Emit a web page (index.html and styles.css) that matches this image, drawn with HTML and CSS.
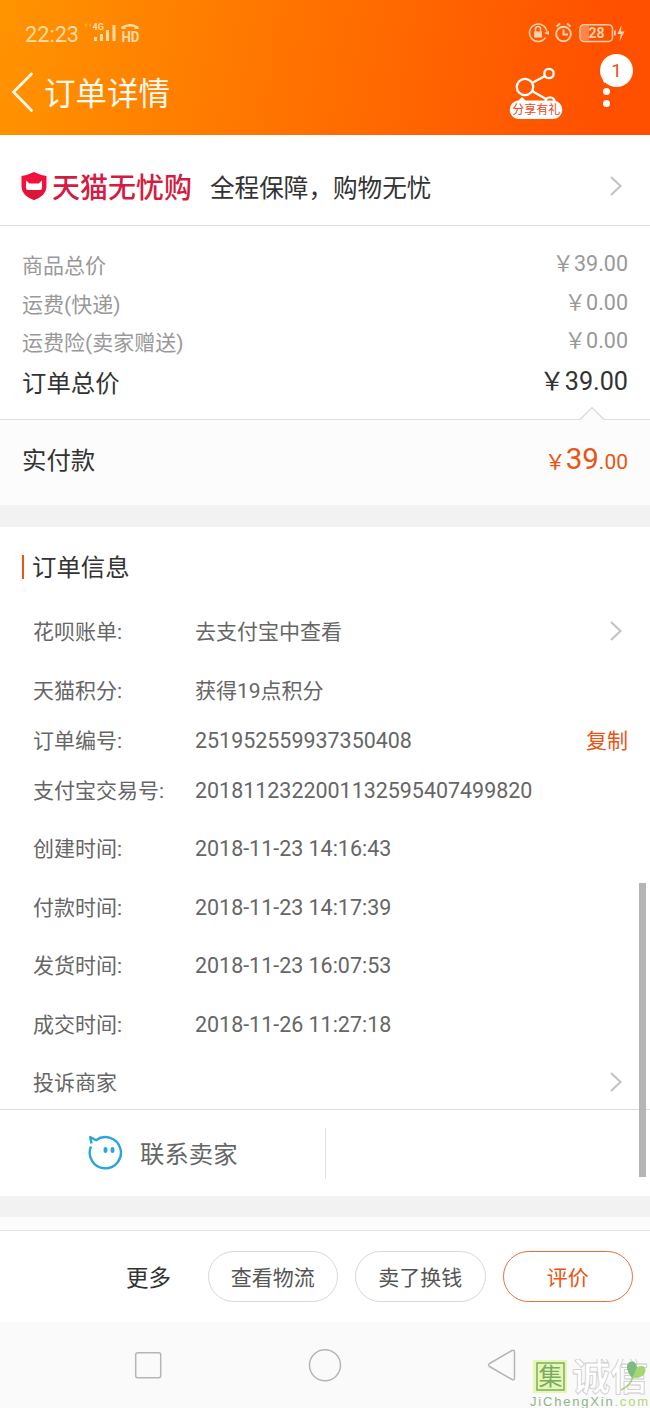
FILE: index.html
```html
<!DOCTYPE html>
<html lang="zh-CN">
<head>
<meta charset="utf-8">
<title>订单详情</title>
<link rel="stylesheet" href="styles.css">
</head>
<body>
<header class="header">
  <div class="status">
    <span class="clock">22:23</span>
    <svg class="signal" width="60" height="24" viewBox="0 0 60 24">
      <path d="M2 4l3-2v4zM7 4l2-2v4z" opacity=".35"/>
      <text x="10.500" y="8.500" class="net">4G</text>
      <path d="M12 16h3v4h-3zM18 13h3v7h-3zM24 9h3v11h-3zM30.500 4h3v16h-3z"/>
      <path d="M39.500 8V5.500q9-5 17 0V8h-4V6.200q-4.500-1.400-9 0V8z"/>
      <text x="39.500" y="20.500" class="hd" textLength="18" lengthAdjust="spacingAndGlyphs">HD</text>
    </svg>
    <svg class="indicators" width="100" height="24" viewBox="0 0 100 24">
      <g fill="none" stroke="#ffd0ad" stroke-width="1.500">
        <path d="M17.500 16.500A8.700 8.700 0 1 1 18.800 10.500"/>
        <path d="M7.500 11V8a2.500 2.500 0 0 1 5 0v3" />
        <circle cx="35.500" cy="13" r="7.300" stroke-width="2"/>
        <path d="M35.500 8.500V13.500H40M28.500 5.500l3.500-3M42.500 5.500L39 2.500" stroke-width="2"/>
        <rect x="52" y="3.700" width="32.500" height="16.800" rx="4"/>
      </g>
      <path d="M6 10.500h8v6H6zM16 12l5-2v4zM86 9.500h1.800v5H86zM93.500 4L89.500 13h3.200L91.500 20.500L96.500 10.500h-3.400z" fill="#ffd0ad"/>
      <path d="M55 4.500h6v15h-6q-2 0-2-3v-9q0-3 2-3z" fill="#ffd0ad" opacity=".4"/>
      <text x="68.500" y="17" class="battery" text-anchor="middle">28</text>
    </svg>
  </div>
  <div class="titlebar">
    <svg class="back" width="26" height="42" viewBox="0 0 26 42"><path d="M22.500 3L4.500 21L22.500 39.500" fill="none" stroke="#fff8e8" stroke-width="2.800" stroke-linecap="round"/></svg>
    <h1 class="title">订单详情</h1>
    <div class="share">
      <svg width="56" height="52" viewBox="0 0 56 52">
        <g fill="none" stroke="#fff" stroke-width="2.300">
          <circle cx="17" cy="20" r="8.200"/><circle cx="41" cy="6.500" r="4.700"/><circle cx="42" cy="35" r="4.700"/>
          <path d="M24 16L37 9M24 24L38 32"/>
        </g>
        <path d="M10 34l4-4l4 4zM10 33.500H46a9.300 9.300 0 0 1 0 18.500H10a9.300 9.300 0 0 1 0-18.500z" fill="#fff"/>
        <text x="28.200" y="47.200" text-anchor="middle" class="share-text">分享有礼</text>
      </svg>
    </div>
    <div class="menu">
      <i class="dot"></i><i class="dot"></i><i class="dot"></i>
      <b class="badge">1</b>
    </div>
  </div>
</header>

<section class="promo">
  <svg class="shield" width="26" height="28" viewBox="0 0 26 28">
    <path d="M13 0Q19 3 25.500 4V15Q25 24 13 28Q1 24 .5 15V4Q7 3 13 0z" fill="#f3103c"/>
    <path d="M3 18H23Q20 25 13 28Q6 25 3 18z" fill="#d91737"/>
    <path d="M5 8.500L8.500 11.500H17.500L21 8.500V16q0 2-2 2H7q-2 0-2-2z" fill="#fff"/>
  </svg>
  <strong class="brand">天猫无忧购</strong>
  <span class="slogan">全程保障，购物无忧</span>
  <svg class="chevron" width="14" height="22" viewBox="0 0 14 22"><path d="M2 2L11.500 11L2 20"/></svg>
</section>

<section class="prices">
  <div class="price-row"><span>商品总价</span><span class="amount">￥39.00</span></div>
  <div class="price-row"><span>运费(快递)</span><span class="amount">￥0.00</span></div>
  <div class="price-row"><span>运费险(卖家赠送)</span><span class="amount">￥0.00</span></div>
  <div class="price-row total"><span>订单总价</span><span class="amount">￥39.00</span></div>
</section>
<section class="paid">
  <svg class="notch" width="26" height="15" viewBox="0 0 26 15"><path d="M1 13.500L13 1.500L25 13.500V15H1z" fill="#fcfcfc"/><path d="M1 13.500L13 1.500L25 13.500" fill="none" stroke="#d8d8d8" stroke-width="1.200"/></svg>
  <span class="paid-label">实付款</span>
  <span class="paid-amount">￥<span class="big">39</span>.00</span>
</section>

<section class="info">
  <h2 class="info-title">订单信息</h2>
  <div class="row"><span class="label">花呗账单:</span><span>去支付宝中查看</span><svg class="chevron" width="14" height="22" viewBox="0 0 14 22"><path d="M2 2L11.500 11L2 20"/></svg></div>
  <div class="row"><span class="label">天猫积分:</span><span>获得19点积分</span></div>
  <div class="row tight"><span class="label">订单编号:</span><span class="num">251952559937350408</span><span class="copy">复制</span></div>
  <div class="row tight"><span class="label">支付宝交易号:</span><span class="num">2018112322001132595407499820</span></div>
  <div class="row"><span class="label">创建时间:</span><span class="num">2018-11-23 14:16:43</span></div>
  <div class="row"><span class="label">付款时间:</span><span class="num">2018-11-23 14:17:39</span></div>
  <div class="row"><span class="label">发货时间:</span><span class="num">2018-11-23 16:07:53</span></div>
  <div class="row"><span class="label">成交时间:</span><span class="num">2018-11-26 11:27:18</span></div>
  <div class="row"><span class="label">投诉商家</span><svg class="chevron" width="14" height="22" viewBox="0 0 14 22"><path d="M2 2L11.500 11L2 20"/></svg></div>
</section>

<section class="contact">
  <div class="seller">
    <svg class="bubble" width="36" height="36" viewBox="0 0 36 36">
      <path d="M4 12.500A15.600 15.600 0 1 0 9 6.200L3.200 3L4.500 9.500" fill="none" stroke="#2ba5dc" stroke-width="2.400" stroke-linejoin="round"/>
      <ellipse cx="18.500" cy="16" rx="2" ry="2.900" fill="#2ba5dc"/><ellipse cx="25.500" cy="16" rx="2" ry="2.900" fill="#2ba5dc"/>
    </svg>
    <span class="seller-text">联系卖家</span>
  </div>
</section>
<div class="below"></div>

<section class="actions">
  <span class="more">更多</span>
  <button class="btn">查看物流</button>
  <button class="btn">卖了换钱</button>
  <button class="btn primary">评价</button>
</section>

<footer class="nav">
  <svg width="650" height="86" viewBox="0 0 650 86" fill="none" stroke="#b5b5b5" stroke-width="1.500">
    <rect x="135.700" y="30.700" width="25" height="25" rx="2"/>
    <circle cx="325" cy="43.200" r="15.500"/>
    <path d="M489.500 41.500L512 28.500Q514.500 27.500 514.500 30V56Q514.500 58.500 512 57.500L489.500 44.500Q487.500 43 489.500 41.500z"/>
  </svg>
</footer>

<div class="scrollbar"></div>
<svg class="watermark" width="122" height="50" viewBox="0 0 122 50">
  <rect x="5" y="1" width="34" height="33" fill="#e6f8ae"/>
  <rect x="9" y="4" width="27" height="27" fill="none" stroke="#7cab71" stroke-width="1.500"/>
  <text x="22.500" y="26" text-anchor="middle" class="wm-ji">集</text>
  <text x="44" y="30.500" class="wm-cx">诚信</text>
  <path d="M93 31Q102 27 105 18" stroke="#a8cf76" stroke-width="1.500" fill="none"/>
  <path d="M104 19Q96 8 101 3.500Q107 0 109 8Q118 5 117.500 12Q116 20 104 19z" fill="#a7d66f"/>
  <path d="M104 19Q96 8 101 3.500Q107 0 109 8Q107 14 104 19z" fill="#7dbb82"/>
  <text x="2" y="46.500" class="wm-url" textLength="118"><tspan fill="#8eb58a">JiChengXin</tspan><tspan fill="#b3d77b">.com</tspan></text>
</svg>
</body>
</html>
```

FILE: styles.css
```css
* { box-sizing: border-box; }
body {
  position: relative;
  margin: 0;
  width: 650px;
  height: 1408px;
  overflow: hidden;
  background: #fff;
  color: #666;
  font: 21px/30px Roboto, "Noto Sans CJK SC", sans-serif;
}
svg { display: block; flex: none; }

.header {
  height: 135px;
  background: linear-gradient(100deg, #ff9400, #ff5000 92%);
  color: #fff;
}
.status { display: flex; height: 50px; padding: 20px 22px 0 25px; color: #ffdca8; }
.clock { width: 57px; font-size: 21.700px; }
.signal { margin-top: 1px; fill: #ffdda8; }
.net { font: bold 9px Roboto, sans-serif; }
.hd { font: bold 15px Roboto, sans-serif; }
.indicators { margin: 1px 0 0 auto; }
.battery { font: bold 14px Roboto, sans-serif; fill: #ffd0ad; }
.titlebar { display: flex; align-items: flex-start; padding: 0 17px 0 9px; }
.back { margin-top: 21px; }
.title { margin: 25px 0 0 9px; font-size: 31.500px; line-height: 40px; font-weight: 400; color: #fffaf0; }
.share { margin: 17px 0 0 auto; }
.share-text { font: 12px "Noto Sans CJK SC", sans-serif; fill: #e8481d; }
.menu { position: relative; display: flex; flex-direction: column; gap: 5px; width: 33px; margin: 26px 0 0 36px; padding-left: 3px; }
.dot { width: 7px; height: 7px; border-radius: 50%; background: #fff; }
.badge {
  position: absolute;
  left: 0;
  top: -22px;
  width: 33px;
  height: 33px;
  border-radius: 50%;
  background: #fff;
  color: #e75420;
  font: 19px/33px Roboto, sans-serif;
  text-align: center;
}

.promo { display: flex; align-items: center; height: 91px; padding: 12px 27px 0 21px; border-bottom: 1px solid #ddd; }
.shield { margin: 0 5px 0 0; }
.brand { width: 158px; padding-top: 5px; font-size: 28px; font-weight: 500; color: #d41c43; white-space: nowrap; }
.slogan { padding-top: 6px; font-size: 24.600px; color: #333; }
.chevron { margin-left: auto; fill: none; stroke: #c5c5c5; stroke-width: 2.200; }

.prices { height: 193px; padding: 21px 22px 0; color: #999; }
.price-row { display: flex; justify-content: space-between; height: 38.600px; line-height: 38.600px; }
.amount { font-size: 21.500px; margin-top: -2px; }
.total { margin-top: 2px; font-size: 24.400px; color: #333; }
.total .amount { font-size: 25.200px; }
.paid {
  position: relative;
  display: flex;
  justify-content: space-between;
  align-items: center;
  height: 86px;
  padding: 0 22px 6px;
  border-top: 1px solid #dfdfdf;
  background: #fcfcfc;
  color: #333;
  font-size: 24.400px;
}
.notch { position: absolute; left: 579px; top: -14px; }
.paid-label { padding-top: 2px; }
.paid-amount { padding-top: 1px; color: #e85514; font-size: 21px; }
.big { font-size: 29.500px; }

.info { height: 604px; padding: 25px 27px 0 22px; border-top: 22px solid #f2f2f2; }
.info-title {
  display: flex;
  align-items: center;
  height: 32px;
  margin: 0 0 19px;
  color: #333;
  font-size: 24.400px;
  font-weight: 400;
}
.info-title::before { content: ""; width: 2px; height: 24px; margin: -3px 8px 0 0; background: #e85514; }
.row { display: flex; align-items: center; height: 58.500px; padding-left: 11px; }
.row .chevron { margin-top: -3px; }
.tight { height: 50px; }
.row:nth-of-type(3) { margin-top: -4px; }
.row:nth-of-type(4) + .row { margin-top: 4px; }
.label { width: 162px; }
.num { font-size: 21.450px; }
.copy { margin: 0 -5px 0 auto; color: #e85514; font-size: 21px; }

.contact { display: flex; height: 87px; padding-top: 18px; border-top: 1px solid #ddd; }
.seller {
  display: flex;
  align-items: center;
  gap: 17px;
  width: 326px;
  height: 51px;
  padding-left: 87px;
  border-right: 1px solid #e2e2e2;
  font-size: 24.400px;
}
.bubble { margin-top: -3px; }
.seller-text { padding-top: 3px; }
.below { height: 34px; border-top: 21px solid #f2f2f2; background: #fcfcfc; }
.actions { display: flex; align-items: center; gap: 17px; height: 92px; padding: 0 17px 0 126px; border-top: 1px solid #e4e4e4; }
.more { width: 65px; padding-top: 2px; font-size: 22.500px; color: #333; }
.btn {
  flex: none;
  width: 130.500px;
  height: 51px;
  padding: 0 0 2px;
  border: 1px solid #d8d8d8;
  border-radius: 26px;
  background: #fff;
  color: #555;
  font: 21px/30px "Noto Sans CJK SC", sans-serif;
}
.primary { border-color: #e8703c; color: #e85514; }
.nav { height: 86px; background: #fafafa; }

.scrollbar { position: absolute; left: 639px; top: 883px; width: 7px; height: 294px; background: #b5b5b5; }
.watermark { position: absolute; left: 528px; top: 1359px; }
.wm-ji { font: 24px "Noto Sans CJK SC", sans-serif; fill: #79a96c; }
.wm-cx { font: bold 38px "Noto Sans CJK SC", sans-serif; fill: #fff; stroke: #ccc; stroke-width: .8px; }
.wm-url { font: 13px "Liberation Sans", sans-serif; }
```
